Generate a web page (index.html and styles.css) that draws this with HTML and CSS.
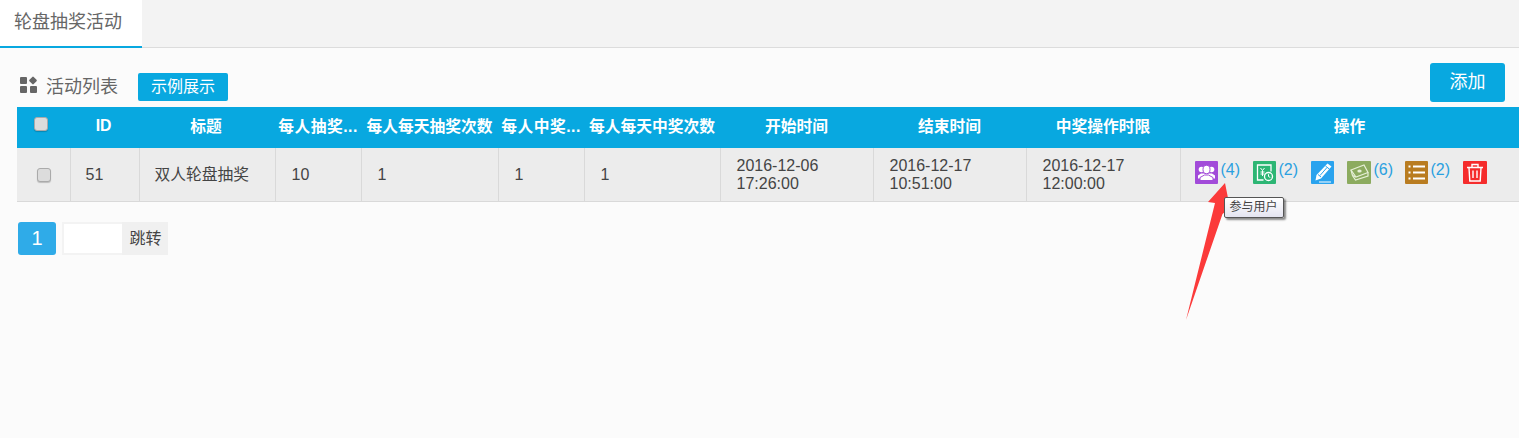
FILE: index.html
```html
<!DOCTYPE html>
<html lang="zh-CN">
<head>
    <meta charset="UTF-8">
    <title>轮盘抽奖活动</title>
    <link rel="stylesheet" href="styles.css">
</head>
<body>
    <div class="tabs">
        <div class="tab">轮盘抽奖活动</div>
    </div>

    <div class="content">
        <div class="toolbar">
            <div class="toolbar-left">
                <svg class="apps-icon" width="18" height="18" viewBox="0 0 18 18">
                    <rect x="0" y="1" width="7" height="7" rx="1" fill="#666"/>
                    <rect x="10" y="1.500" width="6" height="6" transform="rotate(45 13 4.500)" rx="1" fill="#666"/>
                    <rect x="0" y="10" width="7" height="7" rx="1" fill="#666"/>
                    <rect x="10" y="10" width="7" height="7" rx="1" fill="#666"/>
                </svg>
                <span class="list-title">活动列表</span>
                <a class="demo-btn">示例展示</a>
            </div>
            <a class="add-btn">添加</a>
        </div>

        <table class="list">
            <colgroup>
                <col class="c-check"><col class="c-id"><col class="c-title"><col class="c-num1"><col class="c-num2">
                <col class="c-num1"><col class="c-num3"><col class="c-date"><col class="c-date"><col class="c-date2"><col>
            </colgroup>
            <thead>
                <tr>
                    <th class="th-check"><input type="checkbox" class="check"></th>
                    <th class="th-shift">ID</th>
                    <th class="th-shift">标题</th>
                    <th class="th-cut">每人抽奖...</th>
                    <th>每人每天抽奖次数</th>
                    <th class="th-cut">每人中奖...</th>
                    <th>每人每天中奖次数</th>
                    <th>开始时间</th>
                    <th>结束时间</th>
                    <th>中奖操作时限</th>
                    <th>操作</th>
                </tr>
            </thead>
            <tbody>
                <tr>
                    <td class="td-check"><input type="checkbox" class="check"></td>
                    <td class="td-id">51</td>
                    <td class="td-id td-name">双人轮盘抽奖</td>
                    <td>10</td>
                    <td>1</td>
                    <td>1</td>
                    <td>1</td>
                    <td>2016-12-06 17:26:00</td>
                    <td>2016-12-17 10:51:00</td>
                    <td>2016-12-17 12:00:00</td>
                    <td class="td-actions">
                        <div class="actions">
                            <a class="action has-count">
                                <svg class="op op-purple" viewBox="0 0 23 23">
                                    <circle cx="6.500" cy="8.500" r="2.800" fill="#fff"/>
                                    <circle cx="16.500" cy="8.500" r="2.800" fill="#fff"/>
                                    <path d="M3 17.500v-3l3-2h11l3 2v3z" fill="#fff"/>
                                    <ellipse cx="11.500" cy="8.500" rx="3.500" ry="4.200" fill="#fff" stroke="#a24bd9" stroke-width="1"/>
                                    <path d="M5 19.500v-3l4.500-2.500h4l4.500 2.500v3z" fill="#fff" stroke="#a24bd9" stroke-width="1"/>
                                </svg>
                                <span class="count">(4)</span>
                            </a>
                            <a class="action has-count">
                                <svg class="op op-green" viewBox="0 0 23 23">
                                    <path d="M10.500 19H4.500V4h13.500v6.500" fill="none" stroke="#fff" stroke-width="1.300"/>
                                    <path d="M7.500 7l2 2.500 2-2.500M9.500 9.500v5.500M7.500 11h4M7.500 13h4" fill="none" stroke="#fff" stroke-width="1"/>
                                    <circle cx="15.500" cy="15.500" r="4" fill="#2db674" stroke="#fff" stroke-width="1.300"/>
                                    <path d="M15.500 13.200v2.300l1.800 1" fill="none" stroke="#fff" stroke-width="1"/>
                                </svg>
                                <span class="count">(2)</span>
                            </a>
                            <a class="action">
                                <svg class="op op-blue" viewBox="0 0 23 23">
                                    <path d="M16.500 2.500l4 3L10 17.500 4.500 19.500l1-5.500z" fill="#fff"/>
                                    <path d="M14.500 5l4 3.200M7 13.500l3 2.500M9 14.500l7-8" stroke="#2aa3ee" stroke-width="1" fill="none"/>
                                    <path d="M8 21h12" stroke="#fff" stroke-width="1"/>
                                </svg>
                            </a>
                            <a class="action has-count">
                                <svg class="op op-olive" viewBox="0 0 24 23">
                                    <path d="M4 9L17 4l4 7.500-12 4.500z" fill="none" stroke="#e6efd6" stroke-width="1.200"/>
                                    <path d="M4 9l1.500 5.500 3 4.500 12.500-4v-3.500" fill="none" stroke="#e6efd6" stroke-width="1.200"/>
                                    <path d="M5.500 14.500l3.500 1.500" stroke="#e6efd6" stroke-width="1.200"/>
                                    <ellipse cx="12.500" cy="10" rx="2.200" ry="1.600" fill="#e6efd6"/>
                                </svg>
                                <span class="count">(6)</span>
                            </a>
                            <a class="action has-count">
                                <svg class="op op-brown" viewBox="0 0 23 23">
                                    <path d="M8 5.500h12M8 11.500h12M8 17.500h12" stroke="#fff" stroke-width="2"/>
                                    <path d="M3.500 5.500h2M3.500 11.500h2M3.500 17.500h2" stroke="#fff" stroke-width="2"/>
                                </svg>
                                <span class="count">(2)</span>
                            </a>
                            <a class="action">
                                <svg class="op op-red" viewBox="0 0 24 23">
                                    <path d="M4 6.500h16M9 6V3.500h6V6" fill="none" stroke="#fff" stroke-width="1.400"/>
                                    <path d="M6 7l.8 13h10.400l.8-13" fill="none" stroke="#fff" stroke-width="1.400"/>
                                    <path d="M10 9.500v7.500M14 9.500v7.500" stroke="#fff" stroke-width="1.400"/>
                                </svg>
                            </a>
                        </div>
                        <div class="tooltip">参与用户</div>
                    </td>
                </tr>
            </tbody>
        </table>

        <div class="pager">
            <span class="page-cur">1</span>
            <input type="text" class="page-input">
            <span class="page-go">跳转</span>
        </div>
    </div>

    <!-- 红色箭头标注 -->
    <svg class="arrow" width="50" height="140" viewBox="0 0 50 140">
        <path d="M41 0L46 25 38.500 31 2 137 31 20 24 19z" fill="#fb3a3a"/>
    </svg>
</body>
</html>
```

FILE: styles.css
```css
body {
    margin: 0;
    padding: 0;
    background: #fbfbfb;
    color: #333;
    font-family: "Liberation Sans", "Noto Sans CJK SC", sans-serif;
    font-size: 16px;
    min-height: 438px;
    overflow: hidden;
    position: relative;
}
.tabs {
    height: 47px;
    background: #f3f3f3;
    border-bottom: 1px solid #dcdcdc;
}
.tab {
    width: 128px;
    height: 46px;
    padding-left: 14px;
    background: #fff;
    border-bottom: 2px solid #08a8e0;
    color: #666;
    font-size: 18px;
    line-height: 45px;
}
.content {
    padding-left: 17px;
}
.toolbar {
    display: flex;
    justify-content: space-between;
    height: 59px;
    padding-right: 14px;
}
.toolbar-left {
    display: flex;
    align-items: center;
    height: 28px;
    margin-top: 25px;
    padding-left: 3px;
}
.apps-icon {
    margin-right: 8px;
    margin-bottom: 4px;
}
.list-title {
    color: #666;
    font-size: 18px;
    width: 92px;
    margin-bottom: 4px;
}
.demo-btn {
    display: block;
    width: 90px;
    height: 28px;
    line-height: 28px;
    text-align: center;
    background: #08a8e0;
    color: #fff;
    border-radius: 2px;
    font-size: 16px;
}
.add-btn {
    display: block;
    width: 75px;
    height: 39px;
    margin-top: 15px;
    line-height: 38px;
    text-align: center;
    background: #08a8e0;
    color: #fff;
    border-radius: 3px;
    font-size: 18px;
}
table.list {
    width: 1502px;
    table-layout: fixed;
    border-collapse: collapse;
}
.c-check { width: 53px; }
.c-id { width: 69px; }
.c-title { width: 136px; }
.c-num1 { width: 86px; }
.c-num2 { width: 137px; }
.c-num3 { width: 136px; }
.c-date { width: 153px; }
.c-date2 { width: 154px; }
.list thead tr {
    height: 41px;
    background: #08a8e0;
}
.list th {
    color: #fff;
    font-size: 15.75px;
    font-weight: bold;
    padding: 0 2px 4px;
    white-space: nowrap;
}
.list th.th-shift { padding-right: 4px; }
.list th.th-cut { letter-spacing: 0.5px; }
.list tbody tr {
    height: 53px;
    background: #ececec;
}
.list td {
    padding: 2px 16px 0;
    border: 1px solid #d9d9d9;
    border-top: none;
    font-size: 16px;
    line-height: 18px;
    color: #444;
    position: relative;
}
.list td:first-child { border-left: none; }
.list td:last-child { border-right: none; }
.list td.td-id { padding-left: 15px; }
.list td.td-name { font-size: 15.75px; }
.list td.td-check { padding: 0 0 0 1px; text-align: center; }
.list th.th-check { padding: 0 0 9px; text-align: center; }
.list th.th-check .check { margin-left: -5px; }
.check {
    appearance: none;
    display: inline-block;
    width: 14px;
    height: 14px;
    margin: 0;
    vertical-align: middle;
    background: #dcdcdc;
    border: 1px solid #aaa;
    border-radius: 3px;
    box-shadow: 0 1px 1px rgba(0, 0, 0, 0.2);
}
.list td.td-actions { padding: 0 0 0 14px; }
.actions {
    display: flex;
    align-items: center;
    padding-bottom: 4px;
}
.action {
    display: flex;
    margin-right: 13px;
}
.action.has-count {
    width: 45px;
}
.op {
    display: block;
    flex-shrink: 0;
    width: 23px;
    height: 23px;
    border-radius: 1px;
}
.op-purple { background: #a24bd9; }
.op-green { background: #2db674; }
.op-blue { background: #2aa3ee; }
.op-olive { background: #8cab5f; width: 24px; }
.op-brown { background: #b97c20; }
.op-red { background: #f52c2c; width: 24px; }
.count {
    color: #2aa0e0;
    font-size: 16px;
    line-height: 18px;
    margin-left: 3px;
}
.tooltip {
    position: absolute;
    left: 43px;
    top: 49px;
    width: 60px;
    height: 21px;
    box-sizing: border-box;
    border: 1px solid #555;
    border-radius: 2px;
    background: linear-gradient(#fff, #e4e4f0);
    box-shadow: 2px 2px 2px rgba(0, 0, 0, 0.45);
    color: #444;
    font-size: 12px;
    line-height: 19px;
    text-align: center;
    z-index: 4;
}
.pager {
    display: flex;
    height: 33px;
    margin: 20px 0 0 1px;
}
.page-cur {
    width: 38px;
    line-height: 33px;
    text-align: center;
    background: #2fabe8;
    color: #fff;
    border-radius: 3px;
    font-size: 20px;
}
.page-input {
    width: 60px;
    height: 33px;
    box-sizing: border-box;
    margin: 0 0 0 6px;
    padding: 0;
    border: 2px solid #f3f3f3;
    border-right: none;
    background: #fff;
    outline: none;
}
.page-go {
    width: 45px;
    padding-left: 1px;
    line-height: 33px;
    text-align: center;
    background: #f0f0f0;
    color: #444;
}
.arrow {
    position: absolute;
    left: 1184px;
    top: 183px;
    z-index: 3;
}
```
